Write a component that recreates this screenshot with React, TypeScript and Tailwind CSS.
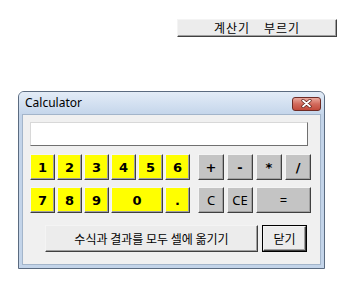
import React from 'react';

const raised =
  'border border-t-[#f4f4f4] border-l-[#f4f4f4] border-r-[#404040] border-b-[#404040] shadow-[inset_-1px_-1px_0_#a0a0a0]';

function Key({ label, yellow, bold, wide }: { label: string; yellow?: boolean; bold?: boolean; wide?: boolean }) {
  return (
    <button
      className={`${raised} h-[26px] flex items-center justify-center text-[13px] text-black leading-none ${
        yellow ? 'bg-[#ffff00]' : 'bg-[#c4c4c4]'
      } ${bold ? 'font-bold font-["DejaVu_Sans",sans-serif]' : 'font-["Noto_Sans",sans-serif]'} ${
        wide ? 'col-span-2' : ''
      }`}
    >
      {label}
    </button>
  );
}

export default function App() {
  const yellowRow1 = ['1', '2', '3', '4', '5', '6'];
  const grayRow1 = ['+', '-', '*', '/'];

  return (
    <div className="w-[352px] h-[283px] bg-white overflow-hidden font-['Noto_Sans_CJK_KR',sans-serif]">
      {/* launch button */}
      <button
        className={`${raised} ml-[177px] mt-[19px] w-[160px] h-[18px] bg-[#ececec] flex items-center justify-center gap-[14px] text-[12px] tracking-[1px] text-black leading-none`}
      >
        <span>계산기</span>
        <span>부르기</span>
      </button>

      {/* window */}
      <div className="ml-[18px] mt-[54px] w-[307px] h-[178px] rounded-t-[6px] border border-[#5b6b80] bg-[#c3d4e9] flex flex-col">
        <div className="h-[22px] rounded-t-[5px] bg-gradient-to-b from-[#e3ecf7] to-[#c5d6eb] flex items-center justify-between pl-[6px] pr-[3px]">
          <span className="text-[12px] text-black font-['Noto_Sans',sans-serif] leading-none">Calculator</span>
          <div className="mt-[1px] w-[29px] h-[14px] rounded-[3px] border border-[#6e2b25] bg-gradient-to-b from-[#e9a89d] via-[#d26a5c] to-[#c24a3b] flex items-center justify-center">
            <svg width="11" height="9" viewBox="0 0 11 9">
              <path d="M2 1.5 L9 7.5 M9 1.5 L2 7.5" stroke="#5a1e18" strokeWidth="3.2" strokeLinecap="round" />
              <path d="M2 1.5 L9 7.5 M9 1.5 L2 7.5" stroke="#ffffff" strokeWidth="1.8" strokeLinecap="round" />
            </svg>
          </div>
        </div>

        <div className="flex-1 mx-[3px] mb-[3px] bg-[#f0f0f0] border border-[#a3b5ca] pl-[7px] pt-[7px]">
          <div className="w-[278px] h-[24px] bg-white border border-t-[#d8d8d8] border-l-[#d8d8d8] border-r-[#707070] border-b-[#707070]" />

          <div className="mt-[8px] flex gap-[8px]">
            <div className="grid grid-cols-[repeat(6,25px)] grid-rows-[26px_26px] gap-x-[2px] gap-y-[7px]">
              {yellowRow1.map((k) => (
                <Key key={k} label={k} yellow bold />
              ))}
              <Key label="7" yellow bold />
              <Key label="8" yellow bold />
              <Key label="9" yellow bold />
              <Key label="0" yellow bold wide />
              <Key label="." yellow bold />
            </div>
            <div className="grid grid-cols-[repeat(4,26px)] grid-rows-[26px_26px] gap-x-[3px] gap-y-[7px]">
              {grayRow1.map((k) => (
                <Key key={k} label={k} bold />
              ))}
              <Key label="C" />
              <Key label="CE" />
              <Key label="=" wide />
            </div>
          </div>

          <div className="mt-[12px] ml-[15px] flex gap-[4px]">
            <button
              className={`${raised} w-[213px] h-[27px] bg-[#ececec] flex items-center justify-center text-[12px] text-black leading-none`}
            >
              수식과 결과를 모두 셀에 옮기기
            </button>
            <div className="w-[45px] h-[27px] border border-black">
              <button
                className={`${raised} w-full h-full bg-[#ececec] flex items-center justify-center text-[12px] text-black leading-none`}
              >
                닫기
              </button>
            </div>
          </div>
        </div>
      </div>
    </div>
  );
}
